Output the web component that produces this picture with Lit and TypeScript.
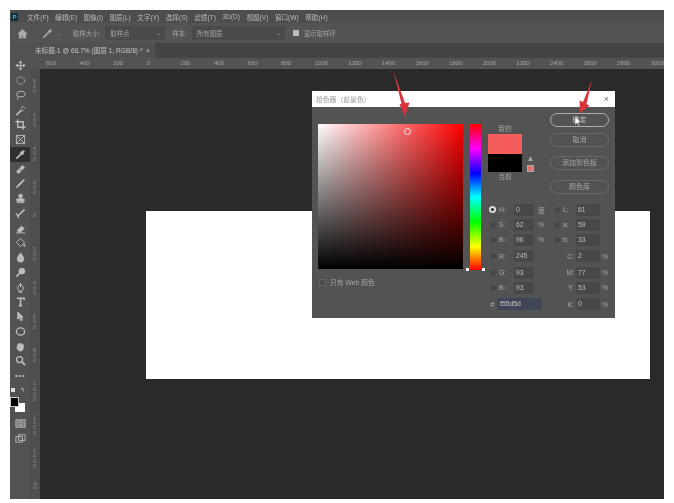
import { LitElement, html, css, svg } from "lit";
import { customElement } from "lit/decorators.js";

const MENU = ["文件(F)", "编辑(E)", "图像(I)", "图层(L)", "文字(Y)", "选择(S)", "滤镜(T)", "3D(D)", "视图(V)", "窗口(W)", "帮助(H)"];
const HR = ["600", "400", "200", "0", "200", "400", "600", "800", "1000", "1200", "1400", "1600", "1800", "2000", "2200", "2400", "2600", "2800", "3000"];
const VR = ["800", "600", "400", "200", "0", "200", "400", "600", "800", "1000", "1200", "1400", "1600"];

const TOOLS = [
  svg`<path d="M6 1v10M1 6h10M6 1 4.5 3h3zM6 11 4.5 9h3zM1 6l2-1.5v3zM11 6 9 4.5v3z"/>`,
  svg`<ellipse cx="6" cy="6" rx="4.5" ry="4" stroke-dasharray="1.5 1"/>`,
  svg`<ellipse cx="6.5" cy="4.5" rx="4.5" ry="3"/><path d="M3 7c-1 2 0 3 1 4"/>`,
  svg`<path d="M1.5 11 7 5.5" stroke-width="1.8"/><path d="M8.5 1v2M8.5 5v2M6 3.5h1.5M10 3.5h1.5"/>`,
  svg`<path d="M3 0.5V9h8.5M0.5 3H9v8.5" stroke-width="1.5"/>`,
  svg`<rect x="1.5" y="1.5" width="9" height="9"/><path d="M1.5 1.5l9 9M10.5 1.5l-9 9"/>`,
  svg`<path d="M1.5 10.5 7 5" stroke-width="1.8"/><path d="M6 3l3 3M7.5 4.5 10 2" stroke-width="2.4"/>`,
  svg`<path d="M2.5 9.5 9.5 2.5" stroke-width="3.6"/><path d="M5 6.5h2" stroke="#555"/>`,
  svg`<path d="M1.5 10.5 3 8l6.5-6.5.8.8L4 9z" fill="currentColor"/>`,
  svg`<path d="M6 1.500a1.500 1.500 0 0 1 1 3v2h3v2.500H2V6.500h3v-2a1.500 1.500 0 0 1 1-3zM2 10.500h8" fill="currentColor"/>`,
  svg`<path d="M1 6l2 2 1 3M3.500 8.500 10.500 1.500" stroke-width="1.600"/>`,
  svg`<path d="M2.500 8 7 3.500l3 2.500-4 4H4zM1 10.800h10" fill="currentColor"/>`,
  svg`<path d="M6 1.500 10.500 6 6 10.500 1.500 6z"/><path d="M10 7.500c1 1.500 1 2.500.3 3-.6-.5-.8-1.500-.3-3z" fill="currentColor"/>`,
  svg`<path d="M6 1c2 3 3.500 4.500 3.500 6.500a3.500 3.500 0 0 1-7 0C2.500 5.500 4 4 6 1z" fill="currentColor"/>`,
  svg`<circle cx="7.500" cy="4.500" r="3.200" fill="currentColor"/><path d="M5 7 1.500 10.500" stroke-width="1.800"/>`,
  svg`<path d="M6 1.500 9.500 6.500 7.500 10H4.500L2.500 6.500z"/><path d="M6 1.500V6" /><path d="M4 10.800h4" stroke-width="1.400"/>`,
  svg`<path d="M2 2.500h8v2M6 2.500v8M4.200 10.500h3.600" stroke-width="1.700"/>`,
  svg`<path d="M3 1v8l2-2 1.500 3.500L8 10 6.500 6.800H9z" fill="currentColor"/>`,
  svg`<ellipse cx="6" cy="6" rx="4.500" ry="4" stroke-width="1.400"/>`,
  svg`<path d="M3 6.500V4a.8.8 0 0 1 1.500 0V3a.8.8 0 0 1 1.500 0v.5a.8.8 0 0 1 1.500 0V4a.8.800 0 0 1 1.500 0v3.500A3.500 3.500 0 0 1 6 11c-2 0-3-2-4-3.500-.3-.8.5-1.300 1-1z" fill="currentColor"/>`,
  svg`<circle cx="5" cy="5" r="3.300" stroke-width="1.400"/><path d="M7.500 7.500l3.500 3.500" stroke-width="1.800"/>`,
];

@customElement("app-root")
export class AppRoot extends LitElement {
  static styles = css`
    :host { display: block; position: relative; width: 674px; height: 503px; background: #fff; overflow: hidden;
      font-family: "Liberation Sans", "Noto Sans CJK SC", sans-serif; }
    .ps { position: absolute; inset: 10px 10px 4px 10px; display: flex; flex-direction: column; background: #2a2a2a; color: #b8b8b8; filter: blur(0.55px); }
    .menu { height: 13px; flex: none; display: flex; align-items: center; background: #4d4d4d; font-size: 6.600px; gap: 6.500px; padding-left: 1px; }
    .logo { width: 7px; height: 8px; background: #12303c; color: #4fb6dc; font-size: 6px; line-height: 8px; text-align: center; font-weight: 700; margin-right: 2.500px; }
    .opts { height: 20px; flex: none; display: flex; align-items: center; background: #545454; font-size: 6.400px; color: #a4a4a4; }
    .opts svg { width: 11px; height: 11px; flex: none; fill: #aaa; stroke: #aaa; }
    .home { margin-left: 7px; }
    .drop { margin-left: 14px; }
    .caret { font-size: 5px; margin: 0 12px 0 4px; }
    .sel { height: 14px; display: flex; align-items: center; justify-content: space-between; background: #4a4a4a; padding: 0 4px 0 5px; box-sizing: border-box; margin: 0 7px 0 5px; }
    .sel1 { width: 60px; }
    .sel2 { width: 93px; margin-right: 8px; }
    .check { width: 6px; height: 6px; background: #bbb; margin: 0 5px 0 0; flex: none; }
    .work { flex: 1; min-height: 0; display: flex; }
    .tools { width: 20px; flex: none; background: #525252; display: flex; flex-direction: column; align-items: center; padding-top: 15.600px; box-sizing: border-box; }
    .tool { width: 20px; height: 14.750px; flex: none; display: flex; align-items: center; justify-content: center; }
    .tool.on { background: #303030; }
    .tool svg { width: 11px; height: 11px; fill: none; stroke: currentColor; stroke-width: 1; color: #bcbcbc; }
    .tool.mask { margin-top: 3px; }
    .dots { font-size: 8px; line-height: 10px; letter-spacing: .5px; height: 12px; margin-top: 3px; color: #bbb; }
    .swatchset { position: relative; width: 20px; height: 30px; flex: none; }
    .fg { position: absolute; left: 0; top: 14px; width: 7px; height: 8px; background: #000; border: 1px solid #ccc; z-index: 1; }
    .bg { position: absolute; left: 5px; top: 20px; width: 10px; height: 9px; background: #fff; }
    .mini { position: absolute; left: 1px; top: 5px; width: 4px; height: 4px; background: #ddd; }
    .swap { position: absolute; left: 10px; top: 4px; font-size: 6px; line-height: 7px; color: #bbb; }
    .doc-area { flex: 1; min-width: 0; display: flex; flex-direction: column; }
    .tabs { height: 15px; flex: none; display: flex; background: #444; }
    .tab { width: 125px; background: #515151; font-size: 6.600px; line-height: 15px; color: #c4c4c4; padding-left: 5px; box-sizing: border-box; white-space: nowrap; }
    .hruler { height: 11px; flex: none; display: flex; background: #535353; padding-left: 16px; font-size: 6px; line-height: 11px; color: #a4a4a4; overflow: hidden; }
    .hruler span { flex: none; width: 33.600px; }
    .main { flex: 1; display: flex; min-height: 0; }
    .vruler { width: 10px; flex: none; background: #4e4e4e; padding-top: 10px; box-sizing: border-box; font-size: 5.200px; line-height: 5.200px; color: #8e8e8e; overflow: hidden; }
    .vruler span { display: block; height: 33.600px; width: 5px; margin-left: 3px; word-break: break-all; }
    .vruler span.last { height: 16px; font-size: 4.200px; line-height: 4px; }
    .canvas { flex: 1; position: relative; background: #2a2a2a; }
    .doc { position: absolute; left: 106px; top: 142px; width: 504px; height: 168px; background: #fff; }
    .dlg { position: absolute; left: 272px; top: 22px; width: 303px; height: 227px; background: #545354; display: flex; flex-direction: column; color: #b0b0b0; font-size: 6.800px; }
    .title { height: 16px; flex: none; background: #fff; color: #999; display: flex; justify-content: space-between; align-items: center; padding: 0 6px 0 4px; }
    .close { font-size: 9px; color: #777; }
    .body { flex: 1; display: flex; padding: 5px 6px 0; }
    .left { width: 145px; flex: none; padding-top: 12px; }
    .sv { position: relative; height: 145px; background: linear-gradient(to top, #000, transparent), linear-gradient(to right, #fff, #f00); }
    .ring { position: absolute; left: 86px; top: 4px; width: 5px; height: 5px; border: 1px solid #eee; border-radius: 50%; }
    .web { display: flex; align-items: center; gap: 4px; margin-top: 8px; margin-left: 1px; color: #a4a4a4; }
    .box { width: 5px; height: 5px; border: 1px solid #666; background: #4c4c4c; }
    .huecol { position: relative; width: 11px; flex: none; margin: 12px 7px 0; height: 146px; background: linear-gradient(to bottom, #f00, #f0f 17%, #00f 34%, #0ff 50%, #0f0 67%, #ff0 84%, #f00); }
    .pip { position: absolute; top: 144px; width: 3px; height: 3px; background: #fff; }
    .pip.l { left: -4px; }
    .pip.r { right: -4px; }
    .right { width: 121px; flex: none; display: flex; flex-direction: column; }
    .top { height: 90px; flex: none; display: flex; justify-content: space-between; }
    .swcol { width: 34px; padding-top: 12px; text-align: center; line-height: 10px; position: relative; color: #a4a4a4; }
    .new { height: 20px; background: #f55d5d; }
    .cur { height: 18px; background: #000; margin-bottom: 0; }
    .warn { position: absolute; left: 39px; top: 53px; width: 7px; height: 7px; background: #e57272; border: 1px solid #aaa; box-sizing: border-box; }
    .warn0 { position: absolute; left: 40px; top: 44px; width: 5px; height: 5px; background: #a4a4a4; clip-path: polygon(50% 0, 100% 100%, 0 100%); }
    .btns { width: 59px; display: flex; flex-direction: column; padding-top: 1px; }
    .btn { height: 14px; flex: none; box-sizing: border-box; border: 1px solid #676767; border-radius: 7px; text-align: center; line-height: 12px; font-size: 7px; color: #a4a4a4; }
    .btn.pri { border-color: #adadad; color: #c4c4c4; }
    .btn.g6 { margin-top: 6px; }
    .btn.g9 { margin-top: 9px; }
    .btn.g10 { margin-top: 10px; }
    .fields { display: grid; grid-template-columns: 9px 17px 20px 18px 9px 15px 24px 9px; grid-template-rows: 15px 15px 15px 18px 15px 15px 18px; align-items: center; font-size: 6.800px; }
    .radio { width: 6px; height: 6px; border-radius: 50%; background: #474747; grid-column: 1; justify-self: center; }
    .radio.c2 { grid-column: 5; }
    .radio.on { background: #222; border: 2px solid #ddd; width: 3px; height: 3px; }
    .lb { padding-left: 2px; color: #aaa; }
    .inp { height: 12px; background: #484848; line-height: 12px; padding-left: 2px; box-sizing: border-box; color: #bebebe; }
    .un { padding-left: 4px; color: #a4a4a4; }
    .un.tight { padding-left: 2px; }
    .rl { grid-column: 5 / span 2; text-align: right; padding-right: 2px; color: #aaa; }
    .hash { grid-column: 1; text-align: center; }
    .hex { grid-column: 2 / span 3; width: 45px; height: 12px; line-height: 12px; background: #3e4658; padding-left: 3px; box-sizing: border-box; color: #c8c8c8; }
    .arrows { position: absolute; inset: 0; width: 674px; height: 503px; pointer-events: none; filter: blur(0.35px); }
  `;

  private row(label: string, val: string, unit: string, col2: boolean, on = false) {
    return html`<span class="radio ${col2 ? "c2" : ""} ${on ? "on" : ""}"></span><span class="lb">${label}</span><span class="inp">${val}</span><span class="un">${unit}</span>`;
  }

  private rl(label: string, val: string, unit: string) {
    return html`<span class="rl">${label}</span><span class="inp">${val}</span><span class="un tight">${unit}</span>`;
  }

  render() {
    return html`<div class="ps">
        <div class="menu"><span class="logo">P</span>${MENU.map((m) => html`<span>${m}</span>`)}</div>
        <div class="opts">
          <svg class="home" viewBox="0 0 12 12"><path d="M6 1.500 1 6.500h1.800V11h2.400V8h1.600v3h2.400V6.500H11z" /></svg>
          <svg class="drop" viewBox="0 0 12 12"><path d="M1.500 10.500 7 5" stroke-width="1.600"/><path d="M7 3l2 2M8 4l2-2" stroke-width="2.600"/></svg>
          <span class="caret">⌄</span>
          <span>取样大小:</span><span class="sel sel1"><span>取样点</span><span>⌄</span></span>
          <span>样本:</span><span class="sel sel2"><span>所有图层</span><span>⌄</span></span>
          <span class="check"></span><span>显示取样环</span>
        </div>
        <div class="work">
          <div class="tools">
            ${TOOLS.map((t, i) => html`<div class="tool ${i === 6 ? "on" : ""}"><svg viewBox="0 0 12 12">${t}</svg></div>`)}
            <div class="dots">•••</div>
            <div class="swatchset"><span class="mini"></span><span class="swap">↰</span><span class="fg"></span><span class="bg"></span></div>
            <div class="tool mask"><svg viewBox="0 0 12 12"><rect x="1" y="2" width="10" height="8" fill="#777"/><circle cx="6" cy="6" r="2.200"/></svg></div>
            <div class="tool"><svg viewBox="0 0 12 12"><rect x="1" y="4" width="7" height="6"/><rect x="4" y="2" width="7" height="6"/></svg></div>
          </div>
          <div class="doc-area">
            <div class="tabs"><span class="tab">未标题-1 @ 66.7% (图层 1, RGB/8) * &nbsp;×</span></div>
            <div class="hruler">${HR.map((n) => html`<span>${n}</span>`)}</div>
            <div class="main">
              <div class="vruler">${VR.map((n, i) => html`<span class="${i === VR.length - 1 ? "last" : ""}">${n}</span>`)}</div>
              <div class="canvas">
                <div class="doc"></div>
                <div class="dlg">
                  <div class="title"><span>拾色器（前景色）</span><span class="close">×</span></div>
                  <div class="body">
                    <div class="left">
                      <div class="sv"><span class="ring"></span></div>
                      <div class="web"><span class="box"></span><span>只有 Web 颜色</span></div>
                    </div>
                    <div class="huecol"><span class="pip l"></span><span class="pip r"></span></div>
                    <div class="right">
                      <div class="top">
                        <div class="swcol">
                          <div>新的</div><div class="new"></div><div class="cur"></div><div>当前</div>
                          <span class="warn0"></span><span class="warn"></span>
                        </div>
                        <div class="btns">
                          <div class="btn pri">确定</div><div class="btn g6">取消</div><div class="btn g9">添加到色板</div><div class="btn g10">颜色库</div>
                        </div>
                      </div>
                      <div class="fields">
                        ${this.row("H:", "0", "度", false, true)}${this.row("L:", "61", "", true)}
                        ${this.row("S:", "62", "%", false)}${this.row("a:", "59", "", true)}
                        ${this.row("B:", "96", "%", false)}${this.row("b:", "33", "", true)}
                        ${this.row("R:", "245", "", false)}${this.rl("C:", "2", "%")}
                        ${this.row("G:", "93", "", false)}${this.rl("M:", "77", "%")}
                        ${this.row("B:", "93", "", false)}${this.rl("Y:", "53", "%")}
                        <span class="hash">#</span><span class="hex">f55d5d</span>${this.rl("K:", "0", "%")}
                      </div>
                    </div>
                  </div>
                </div>
              </div>
            </div>
          </div>
        </div>
      </div>
      <svg class="arrows" viewBox="0 0 674 503">
        <path d="M393 70 401.500 103.500 399.500 104.500 405 116 409.500 102.500 405 103z" fill="#d8343c"/>
        <path d="M592 80 583 102 579.500 100.500 580 113 589.500 105.500 586.500 104z" fill="#d8343c"/>
        <path d="M575 116v9l2-2 1.300 2.800 1.200-.6-1.200-2.700H581z" fill="#fff" stroke="#333" stroke-width=".4"/>
      </svg>`;
  }
}
